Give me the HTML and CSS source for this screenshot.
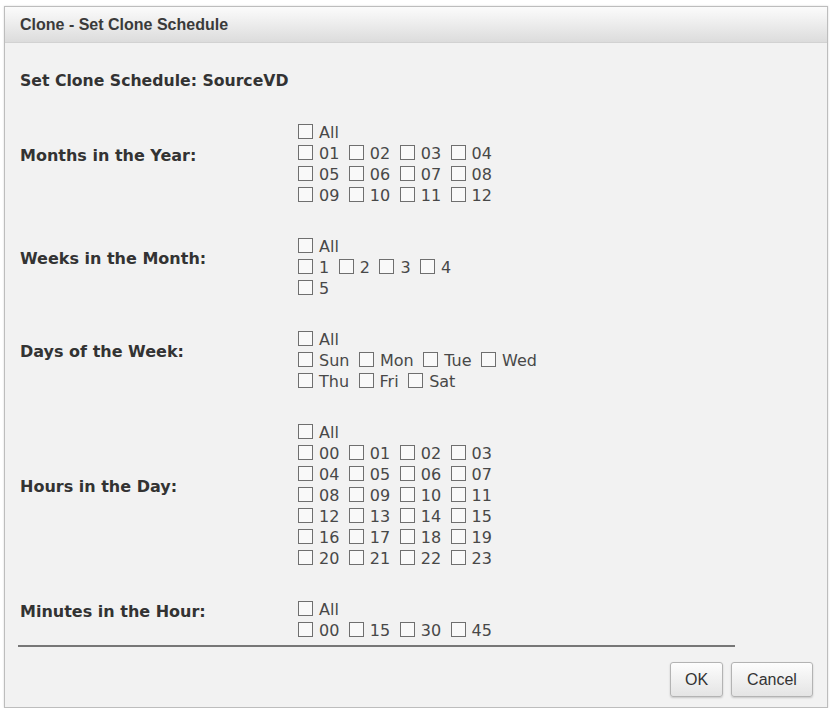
FILE: index.html
```html
<!DOCTYPE html>
<html>
<head>
<meta charset="utf-8">
<title>Clone - Set Clone Schedule</title>
<link rel="stylesheet" href="styles.css">
</head>
<body>
<div class="dialog">
  <div class="titlebar">Clone - Set Clone Schedule</div>
  <div class="content">
    <h1 class="heading">Set Clone Schedule: SourceVD</h1>
    <div class="sched">
      <div class="lbl">Months in the Year:</div>
      <div class="opts">
        <div class="row"><label class="opt"><input type="checkbox"><span>All</span></label></div>
        <div class="row"><label class="opt"><input type="checkbox"><span>01</span></label><label class="opt"><input type="checkbox"><span>02</span></label><label class="opt"><input type="checkbox"><span>03</span></label><label class="opt"><input type="checkbox"><span>04</span></label></div>
        <div class="row"><label class="opt"><input type="checkbox"><span>05</span></label><label class="opt"><input type="checkbox"><span>06</span></label><label class="opt"><input type="checkbox"><span>07</span></label><label class="opt"><input type="checkbox"><span>08</span></label></div>
        <div class="row"><label class="opt"><input type="checkbox"><span>09</span></label><label class="opt"><input type="checkbox"><span>10</span></label><label class="opt"><input type="checkbox"><span>11</span></label><label class="opt"><input type="checkbox"><span>12</span></label></div>
      </div>

      <div class="lbl">Weeks in the Month:</div>
      <div class="opts">
        <div class="row"><label class="opt"><input type="checkbox"><span>All</span></label></div>
        <div class="row"><label class="opt"><input type="checkbox"><span>1</span></label><label class="opt"><input type="checkbox"><span>2</span></label><label class="opt"><input type="checkbox"><span>3</span></label><label class="opt"><input type="checkbox"><span>4</span></label></div>
        <div class="row"><label class="opt"><input type="checkbox"><span>5</span></label></div>
      </div>

      <div class="lbl">Days of the Week:</div>
      <div class="opts">
        <div class="row"><label class="opt"><input type="checkbox"><span>All</span></label></div>
        <div class="row"><label class="opt"><input type="checkbox"><span>Sun</span></label><label class="opt"><input type="checkbox"><span>Mon</span></label><label class="opt"><input type="checkbox"><span>Tue</span></label><label class="opt"><input type="checkbox"><span>Wed</span></label></div>
        <div class="row"><label class="opt"><input type="checkbox"><span>Thu</span></label><label class="opt"><input type="checkbox"><span>Fri</span></label><label class="opt"><input type="checkbox"><span>Sat</span></label></div>
      </div>

      <div class="lbl">Hours in the Day:</div>
      <div class="opts">
        <div class="row"><label class="opt"><input type="checkbox"><span>All</span></label></div>
        <div class="row"><label class="opt"><input type="checkbox"><span>00</span></label><label class="opt"><input type="checkbox"><span>01</span></label><label class="opt"><input type="checkbox"><span>02</span></label><label class="opt"><input type="checkbox"><span>03</span></label></div>
        <div class="row"><label class="opt"><input type="checkbox"><span>04</span></label><label class="opt"><input type="checkbox"><span>05</span></label><label class="opt"><input type="checkbox"><span>06</span></label><label class="opt"><input type="checkbox"><span>07</span></label></div>
        <div class="row"><label class="opt"><input type="checkbox"><span>08</span></label><label class="opt"><input type="checkbox"><span>09</span></label><label class="opt"><input type="checkbox"><span>10</span></label><label class="opt"><input type="checkbox"><span>11</span></label></div>
        <div class="row"><label class="opt"><input type="checkbox"><span>12</span></label><label class="opt"><input type="checkbox"><span>13</span></label><label class="opt"><input type="checkbox"><span>14</span></label><label class="opt"><input type="checkbox"><span>15</span></label></div>
        <div class="row"><label class="opt"><input type="checkbox"><span>16</span></label><label class="opt"><input type="checkbox"><span>17</span></label><label class="opt"><input type="checkbox"><span>18</span></label><label class="opt"><input type="checkbox"><span>19</span></label></div>
        <div class="row"><label class="opt"><input type="checkbox"><span>20</span></label><label class="opt"><input type="checkbox"><span>21</span></label><label class="opt"><input type="checkbox"><span>22</span></label><label class="opt"><input type="checkbox"><span>23</span></label></div>
      </div>

      <div class="lbl">Minutes in the Hour:</div>
      <div class="opts">
        <div class="row"><label class="opt"><input type="checkbox"><span>All</span></label></div>
        <div class="row"><label class="opt"><input type="checkbox"><span>00</span></label><label class="opt"><input type="checkbox"><span>15</span></label><label class="opt"><input type="checkbox"><span>30</span></label><label class="opt"><input type="checkbox"><span>45</span></label></div>
      </div>
    </div>
    <div class="rule"></div>
  </div>
  <div class="footer">
    <button class="btn btn-ok" type="button">OK</button>
    <button class="btn btn-cancel" type="button">Cancel</button>
  </div>
</div>
</body>
</html>
```

FILE: styles.css
```css
html, body {
  margin: 0;
  padding: 0;
  background: #ffffff;
}

.dialog {
  box-sizing: border-box;
  margin: 6px 3px 0 4px;
  height: 702px;
  border: 1px solid #bdbdbd;
  background: #f2f2f2;
  box-shadow: 0 0 2px rgba(0, 0, 0, 0.15);
  display: flex;
  flex-direction: column;
}

.titlebar {
  box-sizing: border-box;
  height: 36px;
  padding-left: 15px;
  display: flex;
  align-items: center;
  background: linear-gradient(#fbfbfb 0%, #efefef 40%, #dcdcdc 100%);
  border-bottom: 1px solid #d2d2d2;
  font-family: "Liberation Sans", Arial, sans-serif;
  font-weight: bold;
  font-size: 16px;
  color: #3a3a3a;
}

.content {
  padding-left: 15px;
}

.heading {
  margin: 28px 0 0 0;
  font-family: "DejaVu Sans", Verdana, sans-serif;
  font-weight: bold;
  font-size: 15.7px;
  line-height: 20px;
  color: #333333;
}

.sched {
  margin-top: 30px;
  display: grid;
  grid-template-columns: 278px auto;
  row-gap: 30px;
}

.lbl {
  align-self: center;
  padding-bottom: 15px;
  font-family: "DejaVu Sans", Verdana, sans-serif;
  font-weight: bold;
  font-size: 16px;
  line-height: 20px;
  color: #333333;
}

.opts {
  display: flex;
  flex-direction: column;
}

.row {
  display: flex;
  align-items: center;
  height: 21px;
}

.opt {
  display: flex;
  align-items: center;
  margin-right: 9.5px;
  font-family: "DejaVu Sans", Verdana, sans-serif;
  font-size: 16px;
  line-height: 21px;
  color: #484848;
}

.opt span {
  position: relative;
  top: 1px;
}

.opt input {
  -webkit-appearance: none;
  appearance: none;
  box-sizing: border-box;
  width: 15px;
  height: 15px;
  margin: 0 6px 0 0;
  border: 1px solid #6f6f6f;
  border-radius: 0;
  background: #f9f9f9;
}

.rule {
  margin: 5px 0 0 -2px;
  width: 717px;
  height: 2px;
  background: #777777;
}

.footer {
  margin-top: 15px;
  padding-right: 14px;
  display: flex;
  justify-content: flex-end;
  gap: 8px;
}

.btn {
  box-sizing: border-box;
  height: 35px;
  padding: 0;
  border: 1px solid #b3b3b3;
  border-radius: 3px;
  background: linear-gradient(#fdfdfd, #e4e4e4);
  box-shadow: 0 1px 2px rgba(0, 0, 0, 0.18);
  font-family: "Liberation Sans", Arial, sans-serif;
  font-size: 16px;
  color: #333333;
}

.btn-ok {
  width: 53px;
}

.btn-cancel {
  width: 82px;
}
```
